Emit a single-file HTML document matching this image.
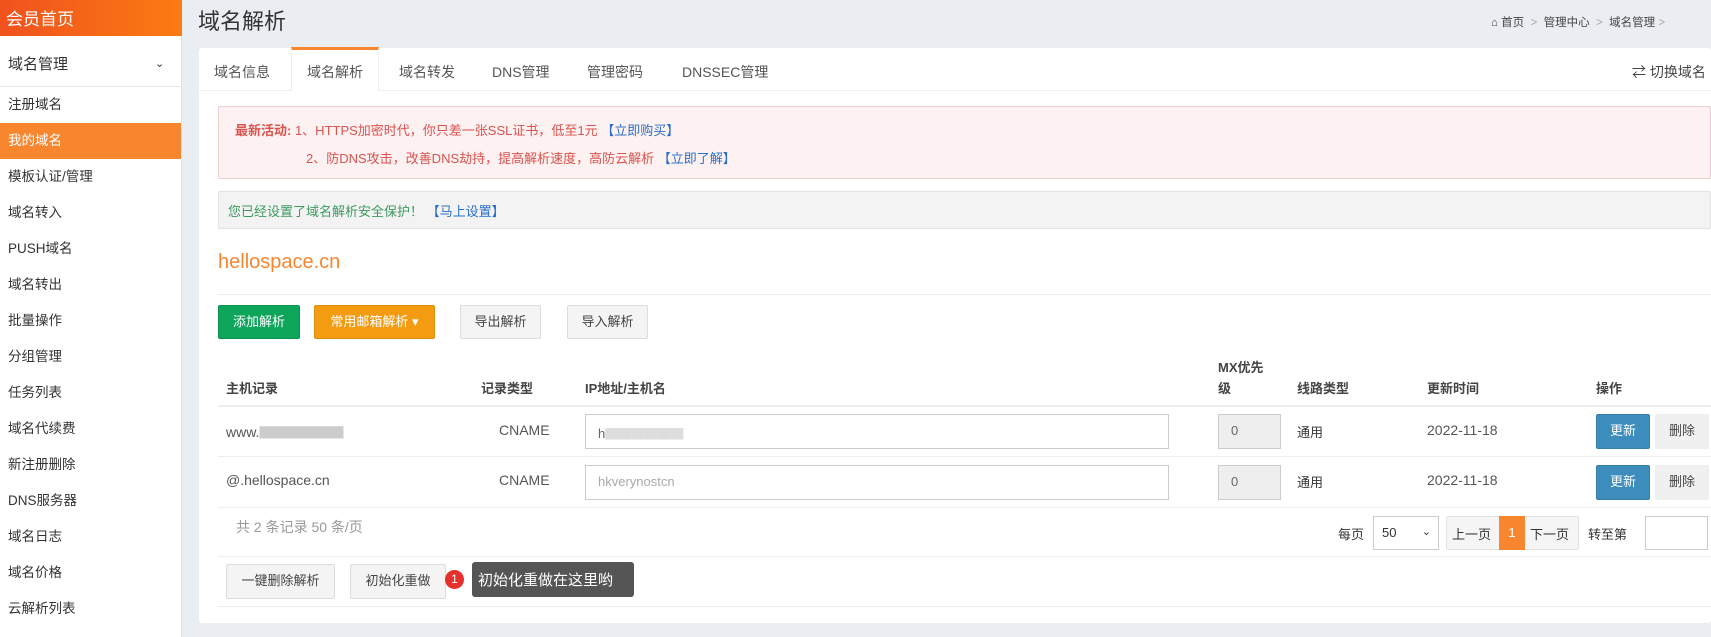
<!DOCTYPE html>
<html><head><meta charset="utf-8"><style>
*{box-sizing:border-box;margin:0;padding:0}
body{width:1711px;height:637px;overflow:hidden;background:#eaedf1;font-family:"Liberation Sans","Noto Sans CJK SC",sans-serif;font-size:13px;color:#333;position:relative}
.a{position:absolute;white-space:nowrap}
.side{position:absolute;left:0;top:0;width:182px;height:637px;background:#fff;border-right:1px solid #e3e3e3}
.hd{position:absolute;left:0;top:0;width:182px;height:36px;background:linear-gradient(90deg,#f0521e,#fb7b12);color:#fff;font-size:17px;padding:5px 6px}
.mi{position:absolute;left:0;width:181px;height:36px;line-height:36px;padding-left:8px;font-size:13.5px;color:#333}
.card{position:absolute;left:199px;top:48px;width:1512px;height:575px;background:#fff;border-radius:3px}
.btn{position:absolute;height:34px;line-height:32px;text-align:center;font-size:13px;border-radius:2px;border:1px solid #ddd;background:#f4f4f4;color:#444}
.inp{position:absolute;height:35px;border:1px solid #ccc;background:#fff}
.hl{position:absolute;left:218px;width:1493px;height:1px;background:#eee}
</style></head><body>
<div class="side">
<div class="hd">会员首页</div>
<div class="mi" style="top:42px;height:45px;line-height:45px;font-size:15px;border-bottom:1px solid #e6e6e6">域名管理<span style="position:absolute;left:155px;font-size:11px">⌄</span></div>
<div class="mi" style="top:87px">注册域名</div>
<div class="mi" style="top:123px;background:#f7862f;color:#fff">我的域名</div>
<div class="mi" style="top:159px">模板认证/管理</div>
<div class="mi" style="top:195px">域名转入</div>
<div class="mi" style="top:231px">PUSH域名</div>
<div class="mi" style="top:267px">域名转出</div>
<div class="mi" style="top:303px">批量操作</div>
<div class="mi" style="top:339px">分组管理</div>
<div class="mi" style="top:375px">任务列表</div>
<div class="mi" style="top:411px">域名代续费</div>
<div class="mi" style="top:447px">新注册删除</div>
<div class="mi" style="top:483px">DNS服务器</div>
<div class="mi" style="top:519px">域名日志</div>
<div class="mi" style="top:555px">域名价格</div>
<div class="mi" style="top:591px">云解析列表</div>
</div>
<div class="a" style="left:198px;top:4px;font-size:22px;color:#333">域名解析</div>
<div class="a" style="left:1491px;top:14px;font-size:11.5px;color:#444">⌂ 首页 <span style="color:#aaa">&nbsp;&gt;&nbsp;</span> 管理中心 <span style="color:#aaa">&nbsp;&gt;&nbsp;</span> 域名管理 <span style="color:#aaa">&gt;</span></div>
<div class="card"></div>
<div style="position:absolute;left:199px;top:90px;width:1512px;height:1px;background:#eee"></div>
<div style="position:absolute;left:291px;top:47px;width:88px;height:44px;background:#fff;border-top:3px solid #f7862f;border-left:1px solid #eee;border-right:1px solid #eee"></div>
<div class="a" style="left:214px;top:62px;font-size:14px;color:#555">域名信息</div>
<div class="a" style="left:307px;top:62px;font-size:14px;color:#555">域名解析</div>
<div class="a" style="left:399px;top:62px;font-size:14px;color:#555">域名转发</div>
<div class="a" style="left:492px;top:62px;font-size:14px;color:#555">DNS管理</div>
<div class="a" style="left:587px;top:62px;font-size:14px;color:#555">管理密码</div>
<div class="a" style="left:682px;top:62px;font-size:14px;color:#555">DNSSEC管理</div>
<div class="a" style="left:1632px;top:62px;font-size:14px;color:#444">⇄ 切换域名</div>
<div style="position:absolute;left:218px;top:106px;width:1493px;height:73px;background:#fdf1f1;border:1px solid #ebcfd2;border-radius:2px"></div>
<div class="a" style="left:235px;top:120px;font-size:13px;color:#d9534f"><b>最新活动:</b> 1、HTTPS加密时代，你只差一张SSL证书，低至1元 <span style="color:#2a6fc9">【立即购买】</span></div>
<div class="a" style="left:306px;top:148px;font-size:13px;color:#d9534f">2、防DNS攻击，改善DNS劫持，提高解析速度，高防云解析 <span style="color:#2a6fc9">【立即了解】</span></div>
<div style="position:absolute;left:218px;top:191px;width:1493px;height:38px;background:#f3f3f3;border:1px solid #e2e2e2;border-radius:2px"></div>
<div class="a" style="left:228px;top:201px;font-size:13px;color:#3c9a5f">您已经设置了域名解析安全保护！ <span style="color:#2a6fc9">【马上设置】</span></div>
<div class="a" style="left:218px;top:251px;font-size:20px;color:#f7862f">hellospace.cn</div>
<div class="hl" style="top:294px"></div>
<div class="btn" style="left:218px;top:305px;width:82px;background:#0ca55a;border-color:#0a9450;color:#fff">添加解析</div>
<div class="btn" style="left:314px;top:305px;width:121px;background:#f39c12;border-color:#e08e0b;color:#fff">常用邮箱解析 ▾</div>
<div class="btn" style="left:460px;top:305px;width:81px">导出解析</div>
<div class="btn" style="left:567px;top:305px;width:81px">导入解析</div>
<div style="font-weight:bold;font-size:13px;color:#444">
<div class="a" style="left:226px;top:378px">主机记录</div>
<div class="a" style="left:481px;top:378px">记录类型</div>
<div class="a" style="left:585px;top:378px">IP地址/主机名</div>
<div class="a" style="left:1218px;top:357px">MX优先</div>
<div class="a" style="left:1218px;top:378px">级</div>
<div class="a" style="left:1297px;top:378px">线路类型</div>
<div class="a" style="left:1427px;top:378px">更新时间</div>
<div class="a" style="left:1596px;top:378px">操作</div>
</div>
<div class="hl" style="top:405px;height:2px"></div>
<div class="hl" style="top:456px"></div>
<div class="hl" style="top:507px"></div>
<div class="hl" style="top:556px"></div>
<div class="hl" style="top:606px"></div>
<div class="a" style="left:226px;top:422px;font-size:14px;color:#555">www.<span style="color:#ccc">▇▇▇▇▇▇</span></div>
<div class="a" style="left:226px;top:472px;font-size:14px;color:#555">@.hellospace.cn</div>
<div class="a" style="left:499px;top:422px;font-size:14px;color:#555">CNAME</div>
<div class="a" style="left:499px;top:472px;font-size:14px;color:#555">CNAME</div>
<div class="inp" style="left:585px;top:414px;width:584px;padding:8px 12px;color:#666;font-size:13px">h<span style="color:#ddd">▇▇▇▇▇▇</span></div>
<div class="inp" style="left:585px;top:465px;width:584px;padding:8px 12px;color:#aaa;font-size:13px">hkverynostcn</div>
<div class="inp" style="left:1218px;top:414px;width:63px;background:#eee;padding:8px 12px;color:#666">0</div>
<div class="inp" style="left:1218px;top:465px;width:63px;background:#eee;padding:8px 12px;color:#666">0</div>
<div class="a" style="left:1297px;top:422px;font-size:13px">通用</div>
<div class="a" style="left:1297px;top:472px;font-size:13px">通用</div>
<div class="a" style="left:1427px;top:422px;font-size:14px;color:#555">2022-11-18</div>
<div class="a" style="left:1427px;top:472px;font-size:14px;color:#555">2022-11-18</div>
<div class="btn" style="left:1596px;top:414px;width:54px;height:35px;background:#3c8dbc;border-color:#367fa9;color:#fff">更新</div>
<div class="btn" style="left:1655px;top:414px;width:54px;height:35px;border-color:#eee;background:#f0f0f0">删除</div>
<div class="btn" style="left:1596px;top:465px;width:54px;height:35px;background:#3c8dbc;border-color:#367fa9;color:#fff">更新</div>
<div class="btn" style="left:1655px;top:465px;width:54px;height:35px;border-color:#eee;background:#f0f0f0">删除</div>
<div class="a" style="left:236px;top:517px;font-size:14px;color:#999">共 2 条记录 50 条/页</div>
<div class="a" style="left:1338px;top:524px;font-size:13px">每页</div>
<div class="inp" style="left:1373px;top:516px;width:66px;height:34px;padding:8px 8px;font-size:13px">50<span style="position:absolute;right:7px;font-size:11px">⌄</span></div>
<div class="btn" style="left:1446px;top:516px;width:133px;height:34px;background:#f5f5f5;border-color:#e3e3e3"></div>
<div class="a" style="left:1452px;top:524px;font-size:13px">上一页</div>
<div class="a" style="left:1499px;top:516px;width:26px;height:34px;background:#f7862f;color:#fff;text-align:center;line-height:34px">1</div>
<div class="a" style="left:1530px;top:524px;font-size:13px">下一页</div>
<div class="a" style="left:1588px;top:524px;font-size:13px">转至第</div>
<div class="inp" style="left:1645px;top:516px;width:63px;height:34px"></div>
<div class="btn" style="left:226px;top:564px;width:109px;height:35px">一键删除解析</div>
<div class="btn" style="left:350px;top:564px;width:96px;height:35px">初始化重做</div>
<div class="a" style="left:445px;top:570px;width:19px;height:19px;border-radius:50%;background:#e5302d;color:#fff;font-size:12px;text-align:center;line-height:19px">1</div>
<div class="a" style="left:472px;top:562px;width:162px;height:35px;background:#555;border-radius:3px;color:#fff;font-size:15px;padding:7px 6px">初始化重做在这里哟</div>
</body></html>
